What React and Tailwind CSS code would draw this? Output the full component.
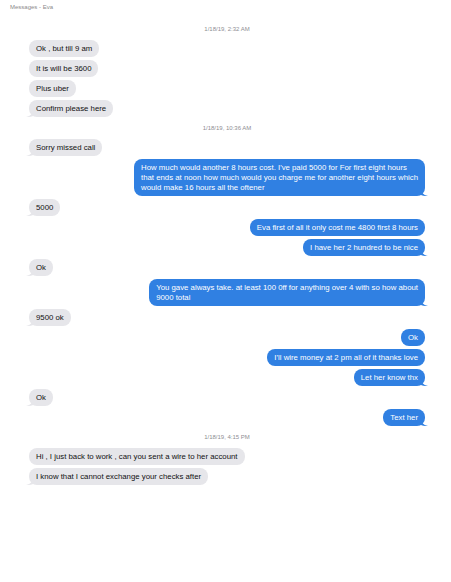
import React from 'react';

const thread = [
  { type: 'time', text: '1/18/19, 2:32 AM' },
  { from: 'them', text: 'Ok , but till 9 am' },
  { from: 'them', text: 'It is will be 3600' },
  { from: 'them', text: 'Plus uber' },
  { from: 'them', text: 'Confirm please here', tail: true },
  { type: 'time', text: '1/18/19, 10:36 AM' },
  { from: 'them', text: 'Sorry missed call', tail: true },
  {
    from: 'me',
    text: "How much would another 8 hours cost. I've paid 5000 for For first eight hours\nthat ends at noon how much would you charge me for another eight hours which\nwould make 16 hours all the oftener",
    tail: true,
  },
  { from: 'them', text: '5000', tail: true },
  { from: 'me', text: 'Eva first of all it only cost me 4800 first 8 hours' },
  { from: 'me', text: 'I have her 2 hundred to be nice', tail: true },
  { from: 'them', text: 'Ok', tail: true },
  {
    from: 'me',
    text: 'You gave always take. at least 100 0ff for anything over 4 with so how about\n9000 total',
    tail: true,
  },
  { from: 'them', text: '9500 ok', tail: true },
  { from: 'me', text: 'Ok' },
  { from: 'me', text: "I'll wire money at 2 pm all of it thanks love" },
  { from: 'me', text: 'Let her know thx', tail: true },
  { from: 'them', text: 'Ok', tail: true },
  { from: 'me', text: 'Text her', tail: true },
  { type: 'time', text: '1/18/19, 4:15 PM' },
  { from: 'them', text: 'Hi , I just back to work , can you sent a wire to her account' },
  { from: 'them', text: 'I know that I cannot exchange your checks after', tail: true },
];

function Bubble({ msg }) {
  const mine = msg.from === 'me';
  return (
    <div className={`flex ${mine ? 'justify-end' : 'justify-start'}`}>
      <div
        className={`relative max-w-[300px] whitespace-pre-line rounded-[8px] px-[7px] py-[3.5px] text-[7.8px] leading-[10px] ${
          mine ? 'bg-[#3080e2] text-white' : 'bg-[#e6e6ea] text-[#111]'
        }`}
      >
        {msg.text}
        {msg.tail &&
          (mine ? (
            <svg
              className="absolute -right-[3px] bottom-0"
              width="8"
              height="8"
              viewBox="0 0 8 8"
            >
              <path d="M0 0 C1 4 3 7 8 8 C4 8 2 7.5 0 6.5 Z" fill="#3080e2" />
            </svg>
          ) : (
            <svg
              className="absolute -left-[3px] bottom-0"
              width="8"
              height="8"
              viewBox="0 0 8 8"
            >
              <path d="M8 0 C7 4 5 7 0 8 C4 8 6 7.5 8 6.5 Z" fill="#e6e6ea" />
            </svg>
          ))}
      </div>
    </div>
  );
}

export default function App() {
  return (
    <div
      className="w-[451px] h-[582px] bg-white"
      style={{ fontFamily: '"Liberation Sans", Arial, sans-serif' }}
    >
      <div className="pl-[10px] pt-[3px] text-[6px] leading-[8px] text-[#8a8a8a]">
        Messages - Eva
      </div>

      <div className="pl-[29px] pr-[26px] pt-[10px] flex flex-col gap-[3px]">
        {thread.map((msg, i) =>
          msg.type === 'time' ? (
            <div
              key={i}
              className="text-center text-[6px] leading-[8px] text-[#8e8e93] py-[4px]"
            >
              {msg.text}
            </div>
          ) : (
            <Bubble key={i} msg={msg} />
          )
        )}
      </div>
    </div>
  );
}
